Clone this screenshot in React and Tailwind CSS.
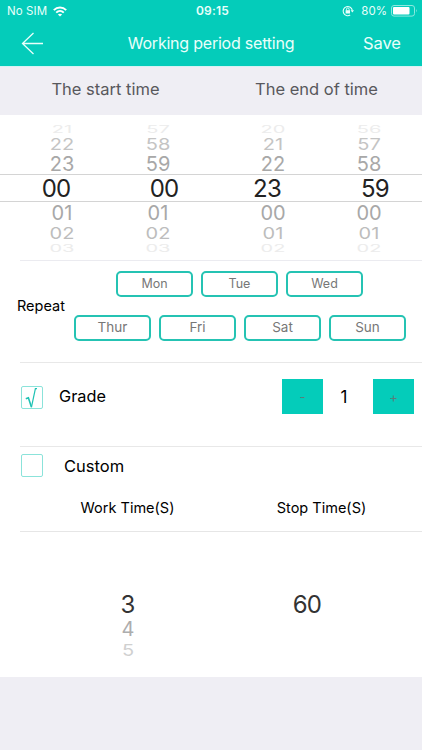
import { useState } from "react";

const hours = Array.from({ length: 24 }, (_, i) => String(i).padStart(2, "0"));
const minutes = Array.from({ length: 60 }, (_, i) => String(i).padStart(2, "0"));

const at = (list, i) => list[(i + list.length) % list.length];

const ROW = "flex items-center justify-center";

const Wheel = ({ list, index, shift }) => (
  <div className="flex w-24 flex-col text-[20px] leading-none text-[#a8a8a8]">
    <div className={`${ROW} h-[15px] text-[#ececec]`}>
      <span className="translate-y-[1px] scale-y-[0.5]">{at(list, index - 3)}</span>
    </div>
    <div className={`${ROW} h-[17px] text-[#c4c4c4]`}>
      <span className="scale-y-[0.8]">{at(list, index - 2)}</span>
    </div>
    <div className={`${ROW} h-[23px]`}>{at(list, index - 1)}</div>
    <div className={`${ROW} h-[27px] text-[24px] tracking-[-0.8px] text-[#222] ${shift}`}>
      {at(list, index)}
    </div>
    <div className={`${ROW} h-[21px]`}>{at(list, index + 1)}</div>
    <div className={`${ROW} h-[21px] text-[#bdbdbd]`}>
      <span className="-translate-y-[1px] scale-y-[0.8]">{at(list, index + 2)}</span>
    </div>
    <div className={`${ROW} h-[8px] text-[#ececec]`}>
      <span className="scale-y-[0.5]">{at(list, index + 3)}</span>
    </div>
  </div>
);

const Day = ({ name, size = "text-[13.5px]" }) => (
  <button
    className={`flex h-[26px] w-[77px] items-center justify-center rounded-[5px] border-2 border-[#25c3b3] leading-none text-[#777] ${size}`}
  >
    {name}
  </button>
);

const Box = ({ checked, onClick }) => (
  <button
    onClick={onClick}
    className="flex h-[23px] w-[22px] items-center justify-center rounded-[2px] border border-[#8be3da]"
  >
    {checked && (
      <svg width="20" height="21" viewBox="0 0 20 21" fill="none" stroke="#1fc2b4">
        <path d="M3.8 11.8 L6.4 10.8 L9.4 20" strokeWidth="1.6" />
        <path d="M9.4 20.4 L13.4 1.6 H15" strokeWidth="1.2" />
      </svg>
    )}
  </button>
);

const App = () => {
  const [grade, setGrade] = useState(1);
  const [mode, setMode] = useState("grade");

  return (
    <div className="h-[750px] w-[422px] overflow-hidden bg-[#efeef4] font-['Inter',sans-serif]">
      {/* Status bar + nav */}
      <header className="h-[66px] bg-[#04ccba] text-[#e9fffb]">
        <div className="grid h-[22px] grid-cols-3 items-center px-[7px] text-[11.5px] leading-none">
          <div className="flex items-center gap-[6px] pt-px">
            <span className="tracking-[0.1px]">No SIM</span>
            <svg width="14" height="11" viewBox="0 0 14 11" fill="none" stroke="#fff" strokeWidth="1.9">
              <path d="M0.8 4.2 C4.3 0.6 9.7 0.6 13.2 4.2" />
              <path d="M3.2 6.6 C5.4 4.5 8.6 4.5 10.8 6.6" />
              <path d="M7 10.6 L4.9 8.5 C6.1 7.4 7.9 7.4 9.1 8.5 Z" fill="#fff" stroke="none" />
            </svg>
          </div>
          <span className="pl-[3px] text-center text-[12px] font-semibold tracking-[0.2px]">09:15</span>
          <div className="-mr-[3px] flex items-center justify-end">
            <svg className="mr-[7px]" width="12" height="12" viewBox="0 0 12 12" fill="none" stroke="#e9fffb">
              <path d="M8.2 10 A4.6 4.6 0 1 1 10.3 5.4" strokeWidth="1.1" />
              <path d="M8.6 5.3 H12 L10.3 7.6 Z" fill="#e9fffb" stroke="none" />
              <rect x="3.6" y="5.2" width="4.4" height="3.3" fill="#e9fffb" stroke="none" />
              <path d="M4.5 5.4 V4.2 A1.3 1.3 0 0 1 7.1 4.2 V5.4" strokeWidth="0.9" />
            </svg>
            <span className="pt-px">80%</span>
            <svg className="ml-[4px]" width="27" height="12" viewBox="0 0 27 12">
              <rect x="0.5" y="0.5" width="23" height="10.6" rx="2.5" fill="none" stroke="#8ce9df" />
              <rect x="2" y="2" width="16.5" height="7.6" rx="1" fill="#fff" />
              <path d="M25 4 Q26.6 5.8 25 7.6 Z" fill="#8ce9df" />
            </svg>
          </div>
        </div>
        <div className="grid h-[42px] grid-cols-[80px_1fr_80px] items-center leading-none">
          <svg className="ml-[21px]" width="23" height="23" viewBox="0 0 23 23" fill="none" stroke="#e9fffb" strokeWidth="1.3">
            <path d="M22 11.5 H1.5 M12.5 1 L1.5 11.5 L12.5 22" />
          </svg>
          <h1 className="text-center text-[16px] tracking-[-0.22px]">Working period setting</h1>
          <button className="text-center text-[16.5px] tracking-[-0.1px]">Save</button>
        </div>
      </header>

      <div className="flex h-[49px] items-center border-t border-[#d5f3f3] pb-[3px] text-[16.5px] text-[#58585c]">
        <span className="w-[211px] text-center">The start time</span>
        <span className="w-[211px] text-center">The end of time</span>
      </div>

      <main className="h-[562px] bg-white text-black">
        {/* Time pickers */}
        <section className="relative flex h-[145px] gap-[19px] pt-[5px] pl-[14px]">
          <div className="absolute top-[59px] left-0 h-[28px] w-full border-y border-[#d4d4d4]" />
          <div className="flex">
            <Wheel list={hours} index={0} shift="-ml-[12px]" />
            <Wheel list={minutes} index={0} shift="-mr-[12px]" />
          </div>
          <div className="flex">
            <Wheel list={hours} index={23} shift="-ml-[12px]" />
            <Wheel list={minutes} index={59} shift="-mr-[12px]" />
          </div>
        </section>

        {/* Repeat days */}
        <section className="ml-5 flex h-[102px] border-t border-[#ebebf0]">
          <span className="-ml-[3px] w-[57px] pt-[34px] text-[14.5px]">Repeat</span>
          <div className="flex flex-col gap-[18px] pt-[10px]">
            <div className="flex gap-2 pl-[42px]">
              <Day name="Mon" size="text-[12.5px]" />
              <Day name="Tue" size="text-[12.5px]" />
              <Day name="Wed" size="text-[12.5px]" />
            </div>
            <div className="flex gap-2">
              <Day name="Thur" />
              <Day name="Fri" />
              <Day name="Sat" />
              <Day name="Sun" />
            </div>
          </div>
        </section>

        {/* Grade */}
        <section className="ml-5 flex h-[84px] items-start border-t border-[#e8e8e8] pr-[8px] pl-[1px] leading-none">
          <div className="pt-[23px]">
            <Box checked={mode === "grade"} onClick={() => setMode("grade")} />
          </div>
          <span className="pt-[25px] pl-4 text-[16.3px]">Grade</span>
          <div className="mt-[16px] ml-auto flex h-[35px] items-center">
            <button
              onClick={() => setGrade(Math.max(1, grade - 1))}
              className="h-full w-[41px] bg-[#04ccba] pt-px text-[13px] text-[#55807c]"
            >
              -
            </button>
            <span className="w-[50px] pt-[2px] pr-[8px] text-center text-[17px]">{grade}</span>
            <button
              onClick={() => setGrade(grade + 1)}
              className="h-full w-[41px] bg-[#04ccba] pt-px text-[13px] text-[#55807c]"
            >
              +
            </button>
          </div>
        </section>

        {/* Custom */}
        <section className="ml-5 h-[85px] border-t border-[#e8e8e8] leading-none">
          <div className="flex h-[37px] items-center pl-[1px]">
            <Box checked={mode === "custom"} onClick={() => setMode("custom")} />
            <span className="pt-px pl-[21px] text-[16.5px]">Custom</span>
          </div>
          <div className="flex pt-[17px] text-[14.5px]">
            <span className="w-[215px] text-center">Work Time(S)</span>
            <span className="w-[173px] text-center">Stop Time(S)</span>
          </div>
        </section>

        <section className="ml-5 flex h-[146px] border-t border-[#e6e6e6] pt-[59px] text-[20px] leading-none text-[#adadad]">
          <div className="flex w-[216px] flex-col items-center">
            <span className="flex h-[27px] items-center text-[24px] text-[#333]">3</span>
            <span className="flex h-[22px] items-center">4</span>
            <span className="flex h-[21px] scale-y-[0.8] items-center text-[#d0d0d0]">5</span>
          </div>
          <div className="flex w-[142px] flex-col items-center">
            <span className="flex h-[27px] items-center text-[24px] tracking-[-0.8px] text-[#333]">60</span>
          </div>
        </section>
      </main>
    </div>
  );
};

export default App;
